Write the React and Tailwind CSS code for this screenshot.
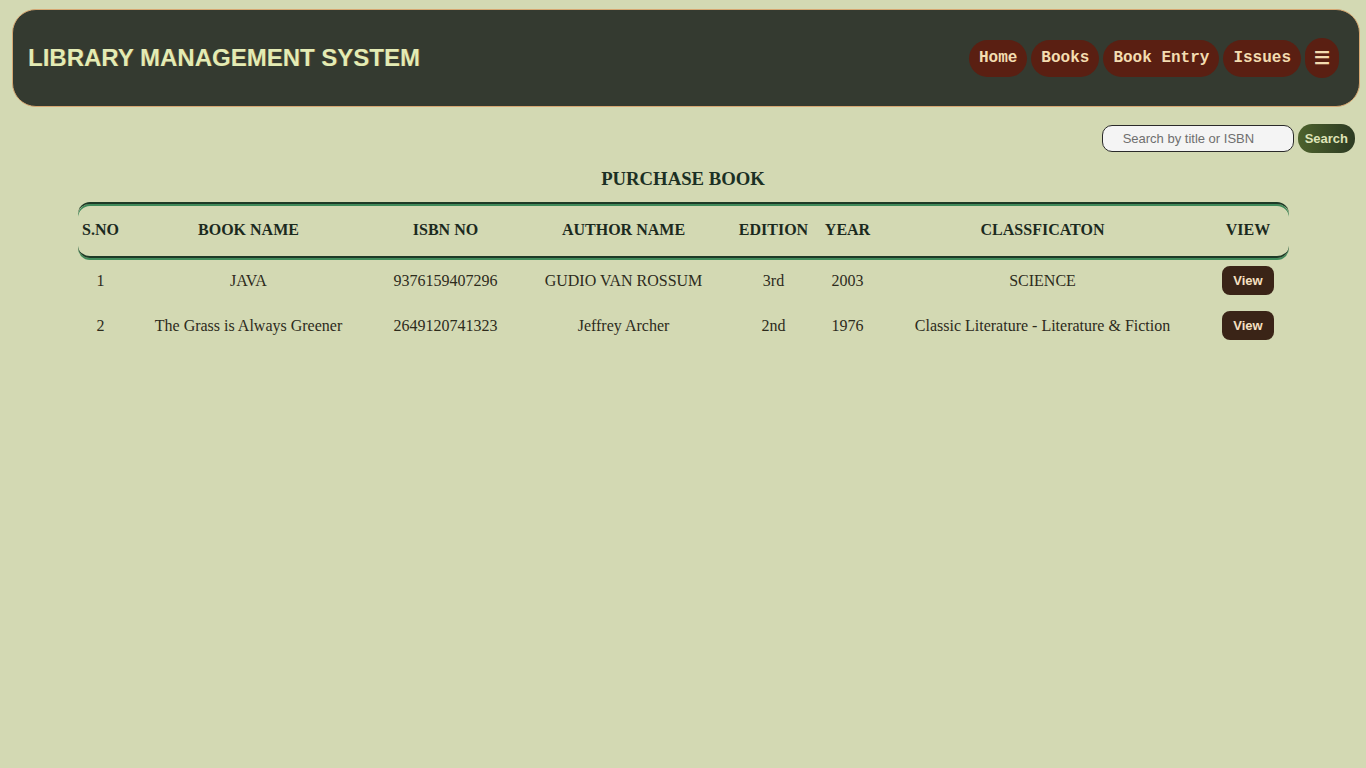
const books = [
  {
    id: 1,
    name: 'JAVA',
    isbn: '9376159407296',
    author: 'GUDIO VAN ROSSUM',
    edition: '3rd',
    year: '2003',
    classification: 'SCIENCE',
  },
  {
    id: 2,
    name: 'The Grass is Always Greener',
    isbn: '2649120741323',
    author: 'Jeffrey Archer',
    edition: '2nd',
    year: '1976',
    classification: 'Classic Literature - Literature & Fiction',
  },
];

const columns = [
  { label: 'S.NO', width: 'w-[46px]' },
  { label: 'BOOK NAME', width: 'w-[250px]' },
  { label: 'ISBN NO', width: 'w-[144px]' },
  { label: 'AUTHOR NAME', width: 'w-[212px]' },
  { label: 'EDITION', width: 'w-[88px]' },
  { label: 'YEAR', width: 'w-[60px]' },
  { label: 'CLASSFICATON', width: 'w-[330px]' },
  { label: 'VIEW', width: 'w-[81px]' },
];

const navLinks = ['Home', 'Books', 'Book Entry', 'Issues'];

export default function App() {
  return (
    <div className="min-h-screen bg-[#d3d9b3] pt-[9px] font-['Liberation_Sans',Arial,sans-serif]">
      {/* Header */}
      <header className="ml-[12px] mr-[6px] flex h-[98px] items-center justify-between rounded-[24px] border border-[#d6a772] bg-[#343a30] pl-[15px] pr-[20px]">
        <h1 className="text-[24px] font-bold text-[#e3ebb4] [text-shadow:1px_0_0_rgba(180,120,60,0.35)]">
          LIBRARY MANAGEMENT SYSTEM
        </h1>
        <nav className="flex items-center gap-[4px]">
          {navLinks.map((link) => (
            <a
              key={link}
              href="#"
              className="rounded-full bg-[#5a1f12] px-[10px] py-[9px] font-['Liberation_Mono','Courier_New',monospace] text-[16px] font-bold leading-[19px] text-[#f3dcb0]"
            >
              {link}
            </a>
          ))}
          <button className="flex h-[40px] w-[34px] items-center justify-center rounded-full bg-[#5a1f12] text-[18px] font-bold text-[#f3dcb0]">
            ☰
          </button>
        </nav>
      </header>

      {/* Search */}
      <div className="mt-[18px] flex justify-end gap-[4px] pr-[11px]">
        <input
          type="text"
          placeholder="Search by title or ISBN"
          className="h-[27px] w-[192px] rounded-[10px] border border-[#2a2a2a] bg-[#f4f4f4] pl-[20px] pr-[38px] text-[13px] text-[#333] placeholder:text-[#6f6f6f] outline-none"
        />
        <button className="h-[29px] -mt-[1px] rounded-[14px] bg-gradient-to-r from-[#4d622c] to-[#2c3a22] px-[7px] text-[13px] font-bold text-[#dfe4b8]">
          Search
        </button>
      </div>

      {/* Title */}
      <h3 className="mt-[15px] mb-[12px] text-center font-['Liberation_Serif','Times_New_Roman',serif] text-[18.72px] font-bold leading-[22px] text-[#1b3024]">
        PURCHASE BOOK
      </h3>

      {/* Table */}
      <table className="mx-auto w-[1211px] table-fixed border-separate border-spacing-0 font-['Liberation_Serif','Times_New_Roman',serif] text-[16px]">
        <thead>
          <tr>
            {columns.map((col, i) => (
              <th
                key={col.label}
                className={`${col.width} border-y-2 border-[#1d3a26] pt-[16px] pb-[17px] text-center font-bold leading-[19px] text-[#1b2a1e] shadow-[inset_0_2px_0_#3f8a5a,0_2px_0_#3f8a5a] ${
                  i === 0 ? 'rounded-l-[12px]' : ''
                } ${i === columns.length - 1 ? 'rounded-r-[12px]' : ''}`}
              >
                {col.label}
              </th>
            ))}
          </tr>
        </thead>
        <tbody className="text-[#2d2b1c]">
          {books.map((book) => (
            <tr key={book.id}>
              <td className="py-[13px] text-center leading-[19px]">{book.id}</td>
              <td className="py-[13px] text-center leading-[19px]">{book.name}</td>
              <td className="py-[13px] text-center leading-[19px]">{book.isbn}</td>
              <td className="py-[13px] text-center leading-[19px]">{book.author}</td>
              <td className="py-[13px] text-center leading-[19px]">{book.edition}</td>
              <td className="py-[13px] text-center leading-[19px]">{book.year}</td>
              <td className="py-[13px] text-center leading-[19px]">{book.classification}</td>
              <td className="text-center align-middle">
                <button className="h-[29px] rounded-[8px] bg-[#3a2417] px-[11px] font-['Liberation_Sans',Arial,sans-serif] text-[13px] font-bold text-[#f6e0c2]">
                  View
                </button>
              </td>
            </tr>
          ))}
        </tbody>
      </table>
    </div>
  );
}
